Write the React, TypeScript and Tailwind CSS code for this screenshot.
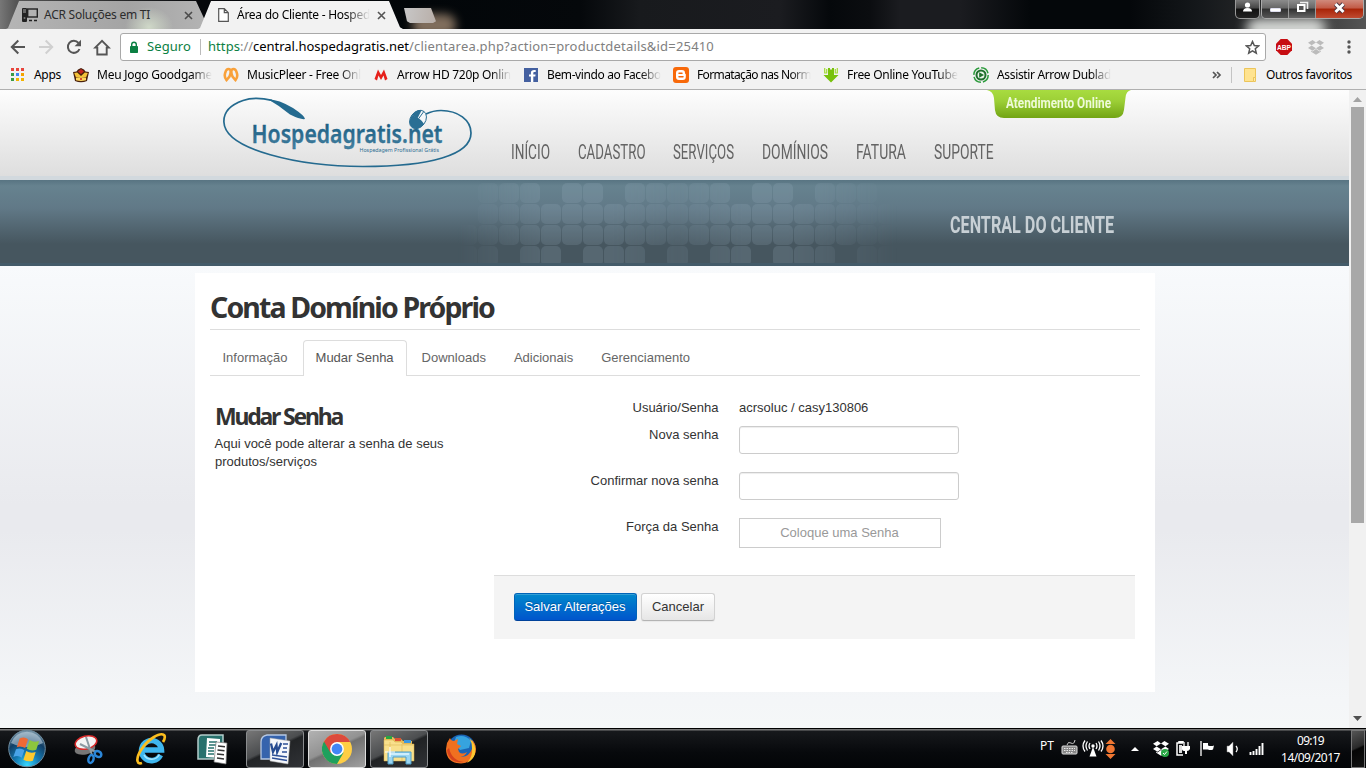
import React, { useLayoutEffect, useRef } from "react";

/** Text fitted to an exact width, either by tracking or by condensing the glyphs. */
function Fit({ w, children, className = "", condense = false }: { w: number; children: string; className?: string; condense?: boolean }) {
  const ref = useRef<HTMLSpanElement>(null);
  useLayoutEffect(() => {
    const el = ref.current;
    if (!el) return;
    el.style.letterSpacing = "0px";
    el.style.transform = "none";
    const natural = el.getBoundingClientRect().width;
    if (condense) el.style.transform = `scaleX(${w / natural})`;
    else el.style.letterSpacing = `${(w - natural) / children.length}px`;
  }, [w, children, condense]);
  return (
    <span className={`block shrink-0 whitespace-nowrap ${className}`} style={{ width: w }}>
      <span ref={ref} className="inline-block origin-left whitespace-nowrap">{children}</span>
    </span>
  );
}

const FADE = "[mask-image:linear-gradient(to_right,black_82%,transparent_100%)]";

function TitleBar() {
  return (
    <div className="relative flex h-[29px] shrink-0 items-start overflow-hidden bg-[linear-gradient(90deg,#777_0,#555_16px,#06080b_200px,#020609_420px,#05080b_580px,#181a1d_640px,#1b1c20_780px,#05080b_830px,#0b0d10_870px,#1b1c20_900px,#1b1c20_960px,#04070a_1030px,#04070a_1130px,#15181b_1200px,#333_1300px,#555_1366px)]">
      <div className="absolute left-[412px] top-[14px] h-[22px] w-[44px] rounded-full bg-[#b69a80] opacity-70 blur-[5px]" />
      <div className="absolute left-[1246px] top-[18px] h-[22px] w-[80px] rounded-full bg-[#e6e9e6] opacity-90 blur-[6px]" />
      <div className="relative mt-px h-[28px] w-[203px] shrink-0 pl-[6px]">
        <div className="flex h-[28px] w-[203px] items-center bg-[radial-gradient(ellipse_24px_20px_at_143px_26px,#cfd8c8,transparent),linear-gradient(90deg,#b5b5b5,#a4a4a4_60%,#b4b4b4)] pl-[15px] [clip-path:polygon(0_100%,2px_96%,13px_0,190px_0,203px_100%)]">
          <svg width="17" height="16" viewBox="0 0 17 16" className="shrink-0">
            <rect x="1" y="1" width="5" height="14" rx="1" fill="#222" />
            <path d="M2 3h3M2 5h3" stroke="#aaa" />
            <circle cx="3.5" cy="11" r="1" fill="#777" />
            <rect x="6.7" y="2" width="9.6" height="8" fill="none" stroke="#222" strokeWidth="1.4" />
            <path d="M8 13.500h3M13 13.500h3" stroke="#222" strokeWidth="1.300" />
          </svg>
          <Fit w={106} className="ml-[6px] text-[12px] text-[#2c2c2c]">ACR Soluções em TI</Fit>
          <svg width="9" height="9" viewBox="0 0 9 9" className="ml-[34px]"><path d="M1 1l7 7M8 1l-7 7" stroke="#4b4b4b" strokeWidth="1.6" /></svg>
        </div>
      </div>
      <div className="relative -ml-[5px] mt-px flex h-[28px] w-[205px] shrink-0 items-center bg-[#f2f2f2] pl-[20px] [clip-path:polygon(0_100%,2px_96%,13px_0,191px_0,202px_94%,205px_100%)]">
        <svg width="11" height="14" viewBox="0 0 11 14" className="shrink-0"><path d="M.7.7h5.6l4 4v8.6H.7zM6.3.7v4h4" fill="white" stroke="#555" strokeWidth="1.2" /></svg>
        <Fit w={133} className={`ml-[8px] text-[12px] text-black ${FADE}`}>Área do Cliente - Hosped</Fit>
        <svg width="9" height="9" viewBox="0 0 9 9" className="ml-[7px] shrink-0"><path d="M1 1l7 7M8 1l-7 7" stroke="#555" strokeWidth="1.6" /></svg>
      </div>
      <div className="relative mt-[8px] h-[15px] w-[33px] bg-[linear-gradient(100deg,#c8c8c8,#b8aea8)] [clip-path:polygon(1px_0,28px_0,100%_88%,30px_100%,7px_100%,4px_88%)]" />
      <div className="relative ml-auto mr-[2px] flex gap-[1px]">
        <div className="flex h-[19px] w-[25px] items-center justify-center rounded-b-[5px] border border-t-0 border-[#999] bg-[linear-gradient(#777,#444_45%,#111_50%,#222)] pb-1">
          <svg width="11" height="10" viewBox="0 0 11 10"><circle cx="5.5" cy="3" r="2.6" fill="white" /><path d="M1 9.500q0-3.500 4.500-3.500t4.500 3.500z" fill="white" /></svg>
        </div>
        <div className="flex h-[19px] w-[103px] overflow-hidden rounded-b-[5px] border border-t-0 border-[#aaa]">
          <div className="flex w-[27px] items-center justify-center border-r border-[#999] bg-[linear-gradient(#8c8c8c,#666_45%,#303030_50%,#555)]"><div className="mt-px h-[4px] w-[11px] rounded-[1px] border border-[#dde] bg-white" /></div>
          <div className="flex w-[27px] items-center justify-center border-r border-[#999] bg-[linear-gradient(#8c8c8c,#666_45%,#303030_50%,#666)] pb-1">
            <svg width="13" height="12" viewBox="0 0 13 12"><path d="M4 1.500h7.500v6.500" fill="none" stroke="#eee" strokeWidth="1.600" /><rect x="2" y="4" width="6.500" height="6" fill="#555" stroke="white" strokeWidth="2" /></svg>
          </div>
          <div className="flex grow items-center justify-center bg-[linear-gradient(#d08a7c,#c25a46_45%,#a82408_50%,#c04a30)] pb-[3px]">
            <svg width="13" height="12" viewBox="0 0 13 12"><path d="M2.500 2l8 8M10.500 2l-8 8" stroke="#4a3440" strokeWidth="4.600" /><path d="M2.500 2l8 8M10.500 2l-8 8" stroke="white" strokeWidth="2.900" /></svg>
          </div>
        </div>
      </div>
    </div>
  );
}

function Toolbar() {
  return (
    <div className="flex h-[33px] shrink-0 items-center bg-[#f2f2f2] pt-[3px]">
      <svg width="16" height="16" viewBox="0 0 16 16" className="ml-[10px] shrink-0"><path d="M15 8H2M8.300 1.500L1.800 8l6.500 6.500" fill="none" stroke="#555" strokeWidth="2" /></svg>
      <svg width="16" height="16" viewBox="0 0 16 16" className="ml-[12px] shrink-0"><path d="M1 8h13M7.700 1.500L14.200 8l-6.500 6.500" fill="none" stroke="#d0d0d0" strokeWidth="2" /></svg>
      <svg width="16" height="16" viewBox="0 0 16 16" className="ml-[12px] shrink-0"><path d="M13.500 10A6 6 0 1 1 12.500 4" fill="none" stroke="#555" strokeWidth="2" /><path d="M15 .8v6.400H8.600z" fill="#555" /></svg>
      <svg width="18" height="17" viewBox="0 0 18 17" className="ml-[11px] shrink-0"><path d="M9 1.800L2.200 8.600H4.300V15.500H13.700V8.600H15.800z" fill="none" stroke="#555" strokeWidth="1.900" /></svg>
      <div className="ml-[9px] flex h-[28px] w-[1146px] items-center rounded-[3px] border border-[#a9a9a9] bg-white">
        <svg width="10" height="13" viewBox="0 0 10 13" className="ml-[8px] shrink-0"><rect x="1" y="5" width="8" height="7" rx=".7" fill="#0b8043" /><path d="M2.700 5.500V3.500a2.300 2.300 0 0 1 4.600 0v2" fill="none" stroke="#0b8043" strokeWidth="1.400" /></svg>
        <Fit w={44} className="ml-[8px] text-[13px] text-[#0b8043]">Seguro</Fit>
        <div className="ml-[9px] h-[16px] w-px bg-[#bbb]" />
        <Fit w={32} className="ml-[7px] text-[13px] text-[#0b8043]">https</Fit>
        <Fit w={13} className="text-[13px] text-[#888]">://</Fit>
        <Fit w={156} className="text-[13px] text-black">central.hospedagratis.net</Fit>
        <Fit w={305} className="text-[13px] text-[#808080]">/clientarea.php?action=productdetails&id=25410</Fit>
        <svg width="15" height="15" viewBox="0 0 15 15" className="ml-auto mr-[5px]"><path d="M7.500 1.500l1.800 4 4.300.4-3.300 2.900 1 4.300-3.800-2.300-3.800 2.300 1-4.300L1.400 5.900l4.300-.4z" fill="none" stroke="#555" strokeWidth="1.500" /></svg>
      </div>
      <svg width="16" height="16" viewBox="0 0 16 16" className="ml-[10px] shrink-0">
        <path d="M4.700 0h6.600L16 4.700v6.600L11.300 16H4.700L0 11.300V4.700z" fill="#c70d12" />
        <text x="1" y="10.900" textLength="14" lengthAdjust="spacingAndGlyphs" fontSize="7.800" fontWeight="700" fill="white" fontFamily="Liberation Sans, sans-serif">ABP</text>
      </svg>
      <Dropbox className="ml-[16px] shrink-0 text-[#bbb]" />
      <svg width="4" height="14" viewBox="0 0 4 14" className="ml-[23px] shrink-0" fill="#555"><circle cx="2" cy="2" r="1.700" /><circle cx="2" cy="7" r="1.700" /><circle cx="2" cy="12" r="1.700" /></svg>
    </div>
  );
}

function Dropbox({ className }: { className: string }) {
  return (
    <svg width="16" height="15" viewBox="0 0 16 15" className={className} fill="currentColor">
      <path d="M4.600 0L8 2.600 3.600 5.300 0 2.800zM11.400 0L8 2.600l4.400 2.700L16 2.800zM0 8l3.600-2.500L8 8.200 4.600 10.800zM16 8l-3.600-2.500L8 8.200l3.400 2.600zM8 8.900l3.400 2.500 1.400-.9v1.300L8 14.800l-4.800-3v-1.300l1.400.9z" />
    </svg>
  );
}

const appColors = ["#e8453c", "#e8453c", "#e8453c", "#3b9b46", "#4285f4", "#f4a300", "#3b9b46", "#f4b400", "#f4b400"];

const crown = (
  <svg width="16" height="16" viewBox="0 0 16 16"><path d="M0 5l3.500-.5L5 2.500 8 1l3 1.500 1.500 2L16 5l-2 9q-6 2.500-12 0z" fill="#4a200c" /><path d="M1.200 6l3-.5L8 9l3.800-3.500 3 .5-1.800 4.500H3z" fill="#f4c238" /><path d="M5 4.500L8 2v5zM11 4.500L8 2v5z" fill="#c5261d" /><path d="M3 11q5-1.500 10 0v2.200q-5 1.500-10 0z" fill="#ffd75c" /><circle cx="8" cy="12" r="1" fill="#d02020" /></svg>
);
const music = (
  <svg width="16" height="16" viewBox="0 0 16 16" fill="none" stroke="#f9a13a" strokeLinecap="round"><path d="M3.500 13C0 9.500 2.500 2 5.500 2s2.500 4 1 7.500L3.500 13zM12.500 13C16 9.500 13.500 2 10.500 2S8 6 9.500 9.500l3 3.500z" strokeWidth="2.600" /></svg>
);
const arrowM = (
  <svg width="14" height="14" viewBox="0 0 14 14"><path d="M.5 11L4 1.500l3 5.500 3-5.500L13.500 11 11 12.500l-1.500-5L7 12l-2.500-4.500-1.500 5z" fill="#e6201b" /></svg>
);
const facebook = (
  <svg width="14" height="14" viewBox="0 0 14 14"><rect width="14" height="14" fill="#4460a0" /><path d="M9.300 14V8.600h2l.3-2.200H9.300V5.100c0-.7.300-1.100 1.200-1.100h1.200V2.100c-3-.5-4.800.4-4.800 2.700v1.600H5v2.200h1.900V14z" fill="white" /></svg>
);
const blogger = (
  <svg width="16" height="16" viewBox="0 0 16 16"><rect width="16" height="16" rx="3" fill="#f8690a" /><path d="M6 3h3q3 0 3 3 0 1 .8 1.200V10q0 3-3 3H6q-3 0-3-3V6q0-3 3-3z" fill="white" /><path d="M6 6.200h3M6 9.800h4" stroke="#f8690a" strokeWidth="1.500" strokeLinecap="round" /></svg>
);
const download = (
  <svg width="16" height="16" viewBox="0 0 16 16"><path d="M5 1h2v1.500h2V1h2v7h4.500L8 15.500.5 8H5z" fill="#78c20c" /><path d="M1.700 1v5h2V2M14.300 1v5h-2V2" fill="none" stroke="#a2db35" strokeWidth="1.200" /></svg>
);
const playRing = (
  <svg width="16" height="16" viewBox="0 0 16 16"><circle cx="8" cy="8" r="7.200" fill="none" stroke="#2a9a3a" strokeWidth="1.500" strokeDasharray="9.300 2" /><circle cx="8" cy="8" r="4.500" fill="#e9f4e9" stroke="#1f6e2c" strokeWidth="2" /><path d="M6.200 5.200L11 8l-4.800 2.800z" fill="#1f6e2c" /></svg>
);

const bookmarks = [
  { icon: crown, label: "Meu Jogo Goodgame", w: 115 },
  { icon: music, label: "MusicPleer - Free Onl", w: 114 },
  { icon: arrowM, label: "Arrow HD 720p Onlin", w: 114 },
  { icon: facebook, label: "Bem-vindo ao Facebo", w: 114 },
  { icon: blogger, label: "Formatação nas Norm", w: 114 },
  { icon: download, label: "Free Online YouTube", w: 111 },
  { icon: playRing, label: "Assistir Arrow Dublad", w: 114 },
];

function Bookmarks() {
  return (
    <div className="flex h-[28px] shrink-0 items-center border-b border-[#b0b0b0] bg-[#f2f2f2] pb-[2px] text-[12px] text-black">
      <div className="ml-[11px] grid w-[13px] grid-cols-3 gap-[2px]">
        {appColors.map((c, i) => <div key={i} className="size-[3px]" style={{ background: c }} />)}
      </div>
      <Fit w={27} className="ml-[10px]">Apps</Fit>
      <div className="ml-[12px] flex">
        {bookmarks.map((b) => (
          <div key={b.label} className="flex w-[150px] shrink-0 items-center">
            <div className="flex w-[16px] shrink-0 justify-center">{b.icon}</div>
            <Fit w={b.w} className={`ml-[8px] ${FADE}`}>{b.label}</Fit>
          </div>
        ))}
      </div>
      <svg width="10" height="8" viewBox="0 0 10 8" className="ml-[89px]"><path d="M1 1l3 3-3 3M5 1l3 3-3 3" fill="none" stroke="#555" strokeWidth="1.700" /></svg>
      <div className="ml-[9px] h-[16px] w-px bg-[#c4c4c4]" />
      <svg width="12" height="14" viewBox="0 0 12 14" className="ml-[12px]"><path d="M.5.5h11v9h-2v4h-9z" fill="#ffe38f" stroke="#ecc55a" /><path d="M9.500 9.500h2v4h-2z" fill="#ffe9a8" stroke="#ecc55a" /></svg>
      <Fit w={86} className="ml-[10px]">Outros favoritos</Fit>
    </div>
  );
}

function Logo() {
  return (
    <svg width="252" height="76" viewBox="222 94 252 76" className="ml-[27px] mt-[4px] shrink-0">
      <defs>
        <linearGradient id="logoInk" x1="0" y1="0" x2="0" y2="1"><stop offset="0.2" stopColor="#1a5c80" /><stop offset="1" stopColor="#4783a3" /></linearGradient>
      </defs>
      <path d="M272 100.300C262 98 250 98 243 100.500C230 105 223.500 112 223.900 122C225 150 300 166.500 363 166.500C430 166.500 471 155 471 133C471 120 458 110.500 441 110.500C435 110.500 430 112 426 114" fill="none" stroke="#246a8f" strokeWidth="1.700" />
      <path d="M268 99.200Q279 99.500 293 108Q305 116 305 119Q301 120 290 114.500Q280 106 268 99.200z" fill="#246a8f" />
      <text x="251.500" y="143" textLength="191" lengthAdjust="spacingAndGlyphs" fontFamily="Noto Sans, sans-serif" fontWeight="600" fontSize="25" fill="url(#logoInk)" stroke="#246a8f" strokeWidth=".3">Hospedagratis.net</text>
      <text x="359.500" y="151.500" textLength="79.500" lengthAdjust="spacingAndGlyphs" fontFamily="Noto Sans, sans-serif" fontSize="6" fill="#2d6d92">Hospedagem Profissional Grátis</text>
      <g transform="rotate(36 418 119.500)">
        <ellipse cx="418" cy="119.500" rx="7.500" ry="10" fill="#f4f7f9" stroke="#246a8f" strokeWidth=".9" />
        <path d="M410.500 119.500a7.500 10 0 0 0 15 0q-6-2.500-15 0z" fill="#2a6f94" />
        <path d="M410.500 119.500a7.500 10 0 0 1 5-9.400l1.500 9z" fill="#2a6f94" />
        <path d="M418 109.500v9" stroke="#246a8f" strokeWidth=".9" />
      </g>
    </svg>
  );
}

const nav: [string, number][] = [["INÍCIO", 39], ["CADASTRO", 67.5], ["SERVIÇOS", 61], ["DOMÍNIOS", 66], ["FATURA", 50], ["SUPORTE", 59.5]];

const mosaic = [
  ".xxx.xx.xxxxx.xx.xxx.",
  ".xxxxxxxxxxxxxxxxxxxx",
  "xxxxxxxxxxxxxxxxxxxxx",
  "xx.xx.xxx.x.xx.xxx.xx",
];

function Header() {
  return (
    <>
      <div className="flex h-[90px] shrink-0 border-b-4 border-[#d2d9de] bg-[linear-gradient(#fdfdfd,#dedede)] pl-[195px]">
        <Logo />
        <div className="ml-[36.500px] mt-[47px] flex gap-[28.100px] text-[20px] leading-[30px] text-[#646464] [font-family:Roboto,sans-serif]">
          {nav.map(([label, w]) => <Fit key={label} w={w} condense>{label}</Fit>)}
        </div>
        <div className="-ml-[7px] h-[28px] w-[144px] bg-[linear-gradient(#a8dc40,#9ccf36_40%,#72a414)] pl-[19px] leading-[27px] text-[#eefad8] [clip-path:path('M0_0H144Q139_1_138.500_8L137_20Q136_28_128_28H17Q9_28_8_20L7_8Q6_1_0_0Z')] [font-family:Roboto,sans-serif]">
          <Fit w={105} condense className="text-[14.500px] font-bold">Atendimento Online</Fit>
        </div>
      </div>
      <div className="flex h-[86px] shrink-0 border-b-[3px] border-[#445b69] bg-[linear-gradient(#587482,#66828f_6px,#617987_28px,#46565f_64px,#46565f)] pl-[457px]">
        <div className="mt-[3px] h-[80px] w-[441px] shrink-0 overflow-hidden [mask-image:linear-gradient(90deg,transparent,black_20%,black_35%,#0009_50%,black_65%,black_75%,transparent)]">
          <div className="grid auto-rows-[20px] grid-cols-21 gap-px">
            {mosaic.join("").split("").map((c, i) => (
              <div key={i} className={c === "x" ? "rounded-[5px] bg-[#9fb8c6]/18" : ""} />
            ))}
          </div>
        </div>
        <Fit w={164} condense className="ml-[52px] mt-[28px] text-[24px] font-bold leading-[34px] text-[#c8d0d5] [font-family:Roboto,sans-serif]">CENTRAL DO CLIENTE</Fit>
      </div>
    </>
  );
}

function Field({ label, children, className }: { label: string; children: React.ReactNode; className: string }) {
  return (
    <div className={`flex ${className}`}>
      <div className="w-[224.500px] shrink-0 text-right">{label}</div>
      <div className="ml-[20.500px]">{children}</div>
    </div>
  );
}

const tabs = ["Informação", "Mudar Senha", "Downloads", "Adicionais", "Gerenciamento"];
const inputCls = "block h-[28px] w-[220px] rounded-[3px] border border-[#ccc] bg-white shadow-[inset_0_1px_1px_rgba(0,0,0,0.075)]";

function Card() {
  return (
    <div className="ml-[195px] mt-[7px] flex h-[419px] w-[960px] shrink-0 flex-col bg-white px-[15px] text-[13px] leading-[18px] text-[#333] [font-family:'Liberation_Sans',sans-serif]">
      <h1 className="h-[57px] border-b border-[#ddd] pt-[16px] text-[28.500px] font-bold leading-[36px] [font-family:'Noto_Sans',sans-serif]">
        <Fit w={284}>Conta Domínio Próprio</Fit>
      </h1>
      <div className="mt-[10px] flex h-[36px] shrink-0 gap-[2px] border-b border-[#ddd]">
        {tabs.map((t) => (
          <div key={t} className={t === "Mudar Senha" ? "h-[36px] rounded-t-[4px] border border-b-0 border-[#ddd] bg-white pl-[11.500px] pr-[12.500px] py-[8px] text-[#555]" : "h-[36px] border border-transparent pl-[11.500px] pr-[12.500px] py-[8px] text-[#666]"}>{t}</div>
        ))}
      </div>
      <div className="flex px-[5px]">
        <div className="w-[279px] shrink-0 pt-[25px]">
          <h2 className="text-[23px] font-bold leading-[30px] [font-family:'Noto_Sans',sans-serif]"><Fit w={127}>Mudar Senha</Fit></h2>
          <p className="mt-[4px] w-[260px] -indent-[0.5px]">Aqui você pode alterar a senha de seus produtos/serviços</p>
        </div>
        <div className="w-[641px] pt-[23px]">
          <Field label="Usuário/Senha" className="h-[27px]">acrsoluc / casy130806</Field>
          <Field label="Nova senha" className="h-[46px]"><input className={inputCls} /></Field>
          <Field label="Confirmar nova senha" className="h-[46px]"><input className={inputCls} /></Field>
          <Field label="Força da Senha" className="h-[57px]">
            <div className="h-[30px] w-[202px] border border-[#ccc] pr-px text-center leading-[28px] text-[#999]">Coloque uma Senha</div>
          </Field>
          <div className="flex h-[64px] gap-[4px] border-t border-[#ddd] bg-[#f4f4f4] pl-[20px] pt-[17px]">
            <button className="h-[28px] w-[123px] rounded-[3px] border border-[#0064b8] border-b-[#00429a] bg-[linear-gradient(#0088cc,#0055cc)] pr-px text-white shadow-[inset_0_1px_0_rgba(255,255,255,0.2)] [text-shadow:0_-1px_0_rgba(0,0,0,0.25)]">Salvar Alterações</button>
            <button className="h-[28px] w-[74px] rounded-[3px] border border-[#d2d2d2] border-b-[#b3b3b3] bg-[linear-gradient(#fff,#e6e6e6)] shadow-[0_1px_1px_rgba(0,0,0,0.05)]">Cancelar</button>
          </div>
        </div>
      </div>
    </div>
  );
}

function Scrollbar() {
  return (
    <div className="flex w-[17px] shrink-0 flex-col items-center bg-[#f1f1f1]">
      <svg width="9" height="5" viewBox="0 0 9 5" className="mt-[7px]"><path d="M0 5l4.500-5L9 5z" fill="#a3a3a3" /></svg>
      <div className="mt-[5px] h-[416px] w-[13px] bg-[#a8a8a8]" />
      <svg width="9" height="5" viewBox="0 0 9 5" className="mb-[7px] mt-auto"><path d="M0 0l4.500 5L9 0z" fill="#505050" /></svg>
    </div>
  );
}

function Taskbar() {
  const btn = "flex h-[38px] items-center justify-center rounded-[3px] border border-[#8a8c8e]";
  return (
    <div className="flex h-[40px] shrink-0 items-center border-t border-black bg-[linear-gradient(#777_0,#777_1px,#17191c_2px,#07090c_60%,#030507)] text-white">
      <svg width="40" height="39" viewBox="0 0 40 39" className="ml-[7px] shrink-0">
        <defs>
          <radialGradient id="orb" cx=".5" cy=".95" r=".95"><stop offset="0" stopColor="#37d8ff" /><stop offset=".35" stopColor="#147cb5" /><stop offset=".7" stopColor="#123f66" /><stop offset="1" stopColor="#7d9aac" /></radialGradient>
        </defs>
        <circle cx="20" cy="19.500" r="18.300" fill="url(#orb)" stroke="#6e8b9d" />
        <path d="M4 14A17 17 0 0 1 36 14Q20 22 4 14z" fill="#dceaf2" opacity=".5" />
        <g transform="translate(-2.500 -1.500) scale(1.12) rotate(6 20 20)">
          <path d="M12.500 10.500q4-2.500 7.500 0l-1.700 8q-3.800-2-7.500 0z" fill="#ee6a35" />
          <path d="M21.500 11q4 2.200 8.500 0l-1.700 8q-4.300 2-8.500 0z" fill="#8cc63e" />
          <path d="M10.300 20.500q4-2 7.500 0l-1.700 7q-3.500-2.300-7.500 0z" fill="#49a3e8" />
          <path d="M19.500 21q4 2.200 8.500 0l-1.700 8q-4.300 1.800-8.500 0z" fill="#fdc92e" />
        </g>
      </svg>
      <svg width="30" height="32" viewBox="0 0 30 32" className="ml-[26px] shrink-0">
        <ellipse cx="12" cy="16" rx="10.500" ry="5.500" fill="#777" transform="rotate(-12 12 16)" />
        <ellipse cx="13" cy="9.500" rx="11" ry="6.500" fill="#f4f4f4" stroke="#d82a2a" strokeWidth="1.500" transform="rotate(-14 13 9.500)" />
        <path d="M13 4l6 18M7 11l16 8" stroke="#8c9aa2" strokeWidth="2" />
        <ellipse cx="25" cy="21" rx="3.500" ry="2.700" fill="none" stroke="#2b86d8" strokeWidth="2.500" transform="rotate(30 25 21)" />
        <ellipse cx="18" cy="26" rx="2.500" ry="4" fill="none" stroke="#2b86d8" strokeWidth="2.500" transform="rotate(15 18 26)" />
      </svg>
      <svg width="32" height="34" viewBox="0 0 32 34" className="ml-[32px] shrink-0">
        <path d="M25.500 23A10 10 0 1 1 26.500 18H9" fill="none" stroke="#3fb7ef" strokeWidth="5.500" />
        <path d="M24.500 22.500A9 9 0 0 1 9 23" fill="none" stroke="#a4e6fd" strokeWidth="1.500" />
        <path d="M7 31C1 33 1 26 6 18C13 7 25 0 29 3Q31 5 28 10" fill="none" stroke="#fbbd1e" strokeWidth="2.700" />
      </svg>
      <svg width="32" height="32" viewBox="0 0 32 32" className="ml-[29px] shrink-0">
        <path d="M6 2h21v24H2V7q0-5 4-5z" fill="#28716d" stroke="#b4cdcb" strokeWidth="1.500" />
        <path d="M11 5l13 1v19l-14-1z" fill="white" /><path d="M13 9h8M13 12h8M12 15h6M12 18h6M12 21h6" stroke="#28716d" strokeWidth="1.500" />
        <path d="M20 9l11 1-1 21-12-2z" fill="white" stroke="#777" strokeWidth=".7" /><path d="M22 13l7 .7M21.500 17l7 .7M21 21l7 .8M21 25l7 1" stroke="#333" strokeWidth="1.600" />
      </svg>
      <div className={`${btn} ml-[18px] w-[58px] bg-[linear-gradient(155deg,#777_0,#4b4d4f_45%,#222426_50%,#303236)]`}>
        <svg width="32" height="32" viewBox="0 0 32 32">
          <path d="M8 2h19v24H2V9Q2 3 8 2z" fill="#3563ad" stroke="#b7c9e4" strokeWidth="1.300" />
          <path d="M11 5l20 3-2 23-18-3z" fill="#f5f7fb" stroke="#aaa" strokeWidth=".5" />
          <path d="M24 11h5M24 15h4M23 19h5M13 22l15 2M13 25l15 2.500" stroke="#2e5097" strokeWidth="1.500" />
          <path d="M12 10.500l2 8.500 3.500-7 .7 7 4-9" fill="none" stroke="#264b91" strokeWidth="2.300" />
        </svg>
      </div>
      <div className={`${btn} ml-[4px] w-[58px] border-[#ddd] bg-[linear-gradient(155deg,#b2b2b2_0,#929292_45%,#717171_50%,#a0a0a0)]`}>
        <svg width="30" height="30" viewBox="0 0 30 30">
          <circle cx="15" cy="15" r="15" fill="#ffce45" />
          <path d="M2 7.500A15 15 0 0 0 15 30L21.500 18.800 15 15z" fill="#1fa05d" />
          <path d="M2 7.500L8.500 18.800 15 15V8H28.200A15 15 0 0 0 2 7.500z" fill="#dc4a3d" />
          <circle cx="15" cy="15" r="6.900" fill="white" /><circle cx="15" cy="15" r="5.400" fill="#4286f5" />
        </svg>
      </div>
      <div className={`${btn} ml-[4px] w-[58px] bg-[linear-gradient(155deg,#777_0,#4b4d4f_45%,#202224_50%,#303236)]`}>
        <svg width="34" height="32" viewBox="0 0 34 32">
          <path d="M3 4h8l2 2h6l2 2h9v20H2V5z" fill="#e8bd58" />
          <path d="M2 7h9l2 2h6l2 2h11v17H2z" fill="#f8e08c" stroke="#d8ad48" strokeWidth=".5" />
          <path d="M4 3h6v3H4z" fill="#29a643" /><path d="M13 5h6v3h-6z" fill="#dd5134" /><path d="M22 7h7v3h-7z" fill="#3d98df" />
          <path d="M2 12h30M8 9v19M20 11v17" stroke="#e2bb5c" strokeWidth=".7" />
          <path d="M6 19h23v12h-5v-7H11v7H6z" fill="#9bd6f2" stroke="#4e9dc6" strokeWidth="1" /><path d="M8 21h19" stroke="#e1f6ff" strokeWidth="1.500" />
          <path d="M8 14v10M3 19h10" stroke="white" strokeWidth="1.200" />
        </svg>
      </div>
      <svg width="32" height="32" viewBox="0 0 32 32" className="ml-[17px] shrink-0">
        <circle cx="16.500" cy="15.500" r="14" fill="#1a64b5" /><path d="M11 4Q20 1 26 8L24 15 15 17 9 10z" fill="#36a3df" />
        <path d="M2 10L5 5Q6 8 9 8l4-2-1 5 4 2-3 3 1 3q3 3 8 0-3 6-9 4 10 3 14-7V7Q33 13 30 21 26 30 16 30.500 1 30 1 16z" fill="#f07020" />
        <path d="M24 5q8 6 6 16-2 6-8 9 6-7 5-15 0-6-3-10z" fill="#fdc731" /><path d="M4 15Q7 28 19 29 4 31 2 17z" fill="#d6421c" />
      </svg>
      <Fit w={14} className="ml-auto mb-[5px] text-[12px]">PT</Fit>
      <svg width="17" height="16" viewBox="0 0 17 16" className="mb-[4px] ml-[7px] shrink-0"><rect x="1" y="7" width="15" height="8" rx="1" fill="#888" stroke="#ddd" /><path d="M3 9.500h11M3 11.500h11M5 13.500h7" stroke="#e8e8e8" strokeDasharray="1.500 1" /><path d="M6 6q1-4 4-2t4-3" stroke="#ccc" fill="none" /></svg>
      <svg width="22" height="17" viewBox="0 0 22 17" className="ml-[4px] shrink-0"><path d="M11 7l3.500 9.500h-7z" fill="white" /><circle cx="11" cy="6" r="1.700" fill="white" /><path d="M8 3q-2 3 0 6M5.500 1.500q-3 4.500 0 9M3 .5q-4 5.500 0 11M14 3q2 3 0 6M16.500 1.500q3 4.500 0 9M19 .5q4 5.500 0 11" fill="none" stroke="white" strokeWidth="1.300" /></svg>
      <svg width="11" height="20" viewBox="0 0 11 20" className="ml-[1px] shrink-0 fill-[#ef7632]"><path d="M5.500 0L10.500 5H.5zM5.500 20L10.500 15H.5z" /><circle cx="5.500" cy="10" r="4.300" /></svg>
      <svg width="8" height="4" viewBox="0 0 8 4" className="ml-[15px] shrink-0"><path d="M0 4l4-4 4 4z" fill="white" /></svg>
      <div className="relative ml-[14px] shrink-0"><Dropbox className="text-white" /><svg width="8" height="8" viewBox="0 0 8 8" className="absolute -bottom-px right-0"><circle cx="4" cy="4" r="4" fill="#28a745" /><path d="M2 4l1.500 1.500L6 2.500" fill="none" stroke="white" /></svg></div>
      <svg width="14" height="15" viewBox="0 0 14 15" className="ml-[7px] shrink-0"><path d="M3 2V.8h4V2M7 2H1v12h6" fill="none" stroke="white" strokeWidth="1.500" /><path d="M3 4h3v8H3z" fill="#ddd" /><path d="M8 1v4M12 1v4" stroke="white" strokeWidth="1.300" /><path d="M6 5h8v3q-1 2-3 2v3H9v-3Q6 10 6 8z" fill="white" /></svg>
      <svg width="15" height="15" viewBox="0 0 15 15" className="ml-[10px] shrink-0"><path d="M1 0v15" stroke="white" strokeWidth="1.300" /><path d="M3 2h5v2.500q3 1 6 0l-1 4q-3 1-5 0H3z" fill="white" /></svg>
      <svg width="14" height="14" viewBox="0 0 14 14" className="ml-[11px] shrink-0"><path d="M1 4h2l4-4v14L3 10H1z" fill="white" stroke="#888" strokeWidth=".5" /><path d="M10 4q2.500 3 0 6" fill="none" stroke="white" strokeWidth="1.300" /></svg>
      <svg width="15" height="12" viewBox="0 0 15 12" className="ml-[9px] shrink-0"><path d="M1.500 9v3M4.500 8v4M7.500 6v6M10.500 3v9M13.500 0v12" stroke="white" strokeWidth="1.900" /></svg>
      <div className="ml-[17px] flex w-[59px] flex-col items-center text-[12px] leading-[17px]">
        <Fit w={27}>09:19</Fit>
        <Fit w={59}>14/09/2017</Fit>
      </div>
      <div className="ml-[11px] mr-px h-[38px] w-[14px] shrink-0 border border-[#777] bg-[linear-gradient(155deg,#555,#2a2a2a_45%,#050505_50%,#111)]" />
    </div>
  );
}

export default function App() {
  return (
    <div className="flex h-[768px] w-[1366px] flex-col overflow-hidden bg-white [font-family:'Noto_Sans',sans-serif]">
      <TitleBar />
      <Toolbar />
      <Bookmarks />
      <div className="flex h-[638px] shrink-0">
        <div className="flex w-[1349px] shrink-0 flex-col bg-[linear-gradient(#f8fafc_176px,#e9eaee_415px,#e9eaee_440px,#f4f6f8_610px,#f5f7f8)]">
          <Header />
          <Card />
        </div>
        <Scrollbar />
      </div>
      <Taskbar />
    </div>
  );
}
